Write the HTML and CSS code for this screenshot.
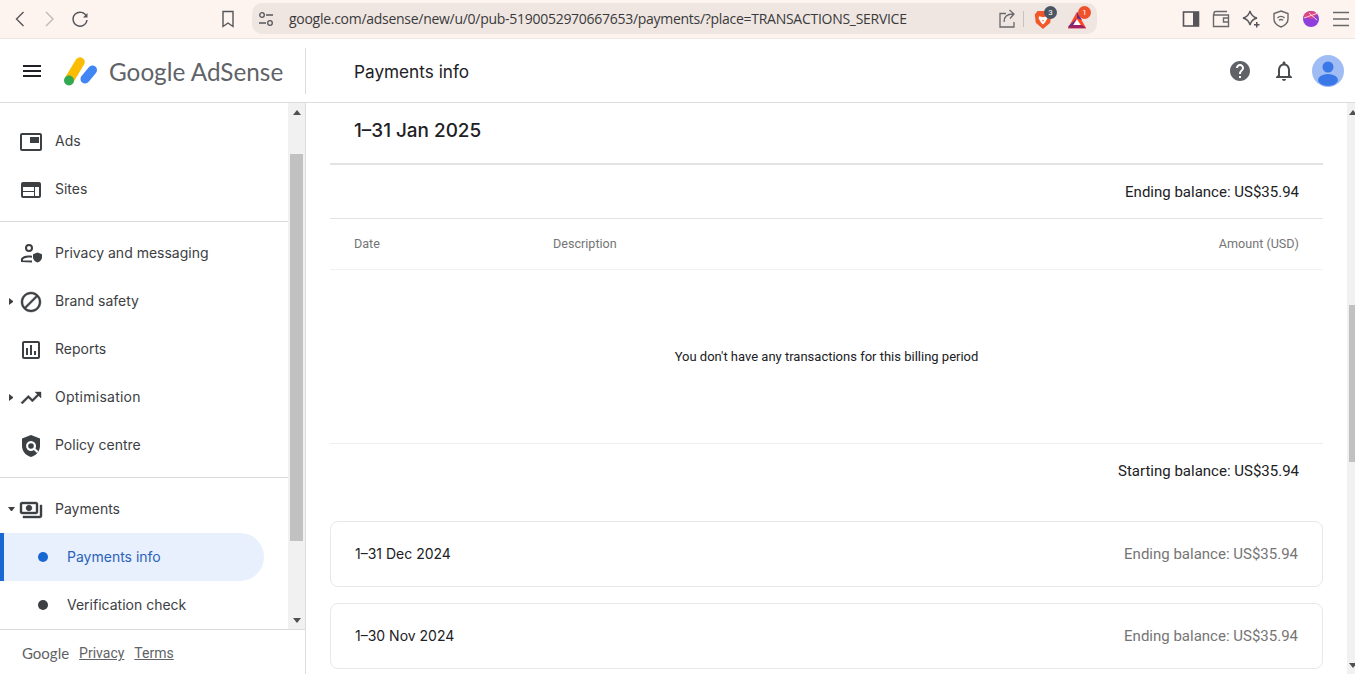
FILE: index.html
```html
<!DOCTYPE html>
<html lang="en">
<head>
<meta charset="utf-8">
<title>Payments info</title>
<link rel="stylesheet" href="styles.css">
</head>
<body>
<div class="toolbar">
  <svg class="tb-icon back" viewBox="0 0 24 24"><path class="stroke-dark" d="M15.500 5l-7 7 7 7"/></svg>
  <svg class="tb-icon forward" viewBox="0 0 24 24"><path class="stroke-light" d="M9 5l7 7-7 7"/></svg>
  <svg class="tb-icon reload" viewBox="0 0 24 24"><path class="stroke-dark" d="M18.500 9.500A7 7 0 1 0 19 13"/><path class="fill-dark" d="M19.500 6v4.500H15z"/></svg>
  <svg class="tb-icon bookmark" viewBox="0 0 24 24"><path class="stroke-dark" d="M7 4.500h10v15l-5-3.500-5 3.500z"/></svg>
  <div class="urlbar">
    <svg class="url-settings" viewBox="0 0 16 16"><circle cx="4" cy="4" r="2.300" class="stroke-dark thin"/><path class="stroke-dark thin" d="M8 4h7M1 12h7"/><circle cx="12" cy="12" r="2.300" class="stroke-dark thin"/></svg>
    <span class="url-text">google.com/adsense/new/u/0/pub-5190052970667653/payments/?place=TRANSACTIONS_SERVICE</span>
    <svg class="tb-icon share" viewBox="0 0 24 24"><path class="stroke-gray thin" d="M11 6.500H5V20h14v-5M9 15c0-5 3-8 9-8M14.500 3l4.500 4-4 4.500"/></svg>
    <span class="url-sep"></span>
    <div class="ext brave">
      <svg viewBox="0 0 20 22" class="ext-svg"><path fill="#f1592a" d="M4 1h12l3 4-1 9-8 7-8-7-1-9z"/><path fill="#fff" d="M6 7l4 1 4-1 1 2-3 5-2 2-2-2-3-5z"/><path fill="#f1592a" d="M9 11h2l-1 2z"/></svg>
      <span class="badge badge-gray">3</span>
    </div>
    <div class="ext bat">
      <svg viewBox="0 0 24 22" class="ext-svg"><path fill="#ff4724" d="M12 1l11 20H1z"/><path fill="#662d91" d="M12 9l-5.500 10H1zM12 1l6 10-6-2z"/><path fill="#9e1f63" d="M6 17h12l5 4H1z"/><path fill="#fff" d="M12 10l4.500 7h-9z"/></svg>
      <span class="badge badge-red">1</span>
    </div>
  </div>
  <svg class="tb-icon side first" viewBox="0 0 24 24"><rect x="4.500" y="5" width="15" height="14" class="stroke-dark thick-ish"/><rect x="14" y="5" width="6" height="14" class="fill-dark"/></svg>
  <svg class="tb-icon side" viewBox="0 0 24 24"><path class="stroke-gray" d="M5 8V6c0-1 1-1.500 2-1.500h11M4.500 8h15v11.500h-15zM20 11h-5.500v4H20"/></svg>
  <svg class="tb-icon side" viewBox="0 0 24 24"><path class="stroke-dark thin" d="M11 4c1 4 3 6 7 7-4 1-6 3-7 7-1-4-3-6-7-7 4-1 6-3 7-7z"/><path class="fill-dark" d="M17 15h1.500v2H20.500v1.500h-2v2H17v-2h-2V17h2z"/></svg>
  <svg class="tb-icon side" viewBox="0 0 24 24"><path class="stroke-gray" d="M12 4l7 2.500V12c0 4-3 6.500-7 8-4-1.500-7-4-7-8V6.500z"/><path class="stroke-gray" d="M8.500 11a5 5 0 0 1 7 0M10 13.300a3 3 0 0 1 4 0"/></svg>
  <svg class="tb-icon side" viewBox="0 0 24 24"><circle cx="12" cy="12" r="8" fill="#8e3fdc"/><path fill="#e0457f" d="M4.300 10a8 8 0 0 1 14-3l-5 5z"/><path d="M5 11l14-5M10 6l8 7" stroke="#f5d5e5" fill="none"/></svg>
  <svg class="tb-icon side" viewBox="0 0 24 24"><path class="stroke-gray" d="M4 5.500h16M4 12h16M4 18.500h16"/></svg>
</div>

<header class="app-header">
  <div class="brand">
    <svg class="menu-icon" viewBox="0 0 24 24"><path d="M3 18h18v-2H3v2zm0-5h18v-2H3v2zm0-7v2h18V6H3z"/></svg>
    <svg class="logo" viewBox="0 0 34 30"><path d="M5.500 23.500L16 6" stroke="#fbbc04" stroke-width="9.500" stroke-linecap="round"/><path d="M21 23L28.500 14" stroke="#4285f4" stroke-width="9" stroke-linecap="round"/><circle cx="5" cy="24.500" r="5" fill="#34a853"/></svg>
    <span class="logo-text">Google AdSense</span>
  </div>
  <h1 class="page-title">Payments info</h1>
  <div class="header-actions">
    <svg class="hd-icon help" viewBox="0 0 24 24"><path d="M12 2C6.480 2 2 6.480 2 12s4.480 10 10 10 10-4.480 10-10S17.520 2 12 2zm1 17h-2v-2h2v2zm2.070-7.750l-.9.920C13.450 12.900 13 13.500 13 15h-2v-.5c0-1.100.45-2.100 1.170-2.830l1.240-1.260c.37-.36.59-.86.59-1.410 0-1.100-.9-2-2-2s-2 .9-2 2H8c0-2.210 1.790-4 4-4s4 1.790 4 4c0 .88-.36 1.680-.93 2.250z"/></svg>
    <svg class="hd-icon bell" viewBox="0 0 24 24"><path d="M12 22c1.100 0 2-.9 2-2h-4c0 1.100.9 2 2 2zm6-6v-5c0-3.070-1.630-5.640-4.500-6.320V4c0-.83-.67-1.500-1.500-1.500s-1.500.67-1.500 1.500v.68C7.640 5.360 6 7.920 6 11v5l-2 2v1h16v-1l-2-2zm-2 1H8v-6c0-2.480 1.510-4.500 4-4.500s4 2.020 4 4.500v6z"/></svg>
    <svg class="avatar" viewBox="0 0 32 32"><circle cx="16" cy="16" r="16" fill="#9fbcf5"/><circle cx="16" cy="12" r="5.500" fill="#3b78e7"/><ellipse cx="16" cy="25" rx="10" ry="6" fill="#3b78e7"/></svg>
  </div>
</header>

<div class="workspace">
  <aside class="sidebar">
    <div class="nav-wrap">
      <nav class="nav">
        <div class="nav-group">
          <a class="nav-item"><span class="caret"></span><svg class="nav-icon" viewBox="0 0 24 24"><rect x="2" y="4" width="20" height="16" rx="1" class="nav-outline"/><rect x="11" y="7" width="9" height="6"/></svg><span class="nav-label">Ads</span></a>
          <a class="nav-item"><span class="caret"></span><svg class="nav-icon" viewBox="0 0 24 24"><path d="M20 4H4c-1.100 0-1.990.9-1.990 2L2 18c0 1.100.9 2 2 2h16c1.100 0 2-.9 2-2V6c0-1.100-.9-2-2-2zm-5 14H4v-4h11v4zm0-5H4V9h11v4zm5 5h-4V9h4v9z"/></svg><span class="nav-label">Sites</span></a>
        </div>
        <div class="nav-group">
          <a class="nav-item"><span class="caret"></span><svg class="nav-icon" viewBox="0 0 24 24"><path d="M10 2a4 4 0 1 1 0 8 4 4 0 0 1 0-8zm0 2a2 2 0 1 0 0 4 2 2 0 0 0 0-4zM2 20v-2.500C2 15 6 13.500 10 13.500c1 0 2 .1 3 .3v2c-1-.2-2-.3-3-.3-3 0-6 1-6 2.300v.7h9v2z"/><path d="M18.500 10.500l4.500 1.800v3c0 2.500-2 4.500-4.500 5.200-2.500-.7-4.500-2.700-4.500-5.200v-3z"/></svg><span class="nav-label">Privacy and messaging</span></a>
          <a class="nav-item"><span class="caret caret-right"></span><svg class="nav-icon heavy" viewBox="0 0 24 24"><path d="M12 2C6.480 2 2 6.480 2 12s4.480 10 10 10 10-4.480 10-10S17.520 2 12 2zM4 12c0-4.420 3.580-8 8-8 1.850 0 3.550.63 4.900 1.690L5.690 16.900C4.630 15.550 4 13.850 4 12zm8 8c-1.850 0-3.550-.63-4.900-1.690L18.310 7.100C19.370 8.450 20 10.150 20 12c0 4.420-3.580 8-8 8z"/></svg><span class="nav-label">Brand safety</span></a>
          <a class="nav-item"><span class="caret"></span><svg class="nav-icon" viewBox="0 0 24 24"><path d="M19 3H5c-1.100 0-2 .9-2 2v14c0 1.100.9 2 2 2h14c1.100 0 2-.9 2-2V5c0-1.100-.9-2-2-2zm0 16H5V5h14v14zM7 10h2v7H7zm4-3h2v10h-2zm4 6h2v4h-2z"/></svg><span class="nav-label">Reports</span></a>
          <a class="nav-item"><span class="caret caret-right"></span><svg class="nav-icon heavy" viewBox="0 0 24 24"><path d="M16 6l2.290 2.290-4.880 4.880-4-4L2 16.590 3.410 18l6-6 4 4 6.300-6.290L22 12V6z"/></svg><span class="nav-label label-wide">Optimisation</span></a>
          <a class="nav-item"><span class="caret"></span><svg class="nav-icon" viewBox="0 0 24 24"><path fill-rule="evenodd" d="M12 1l9 3.500V12c0 5-3.500 9.500-9 11-5.500-1.500-9-6-9-11V4.500zM12 7a5 5 0 1 0 2.900 9.100l3 3 1.500-1.800-3-2.900A5 5 0 0 0 12 7zm0 2.200a2.800 2.800 0 1 1 0 5.600 2.800 2.800 0 0 1 0-5.600z"/></svg><span class="nav-label">Policy centre</span></a>
        </div>
        <div class="nav-group last">
          <a class="nav-item"><span class="caret caret-down"></span><svg class="nav-icon heavy" viewBox="0 0 24 24"><path d="M19 14V6c0-1.100-.9-2-2-2H3c-1.100 0-2 .9-2 2v8c0 1.100.9 2 2 2h14c1.100 0 2-.9 2-2zm-2 0H3V6h14v8zm-7-7c-1.660 0-3 1.340-3 3s1.340 3 3 3 3-1.340 3-3-1.340-3-3-3zm13 0v11c0 1.100-.9 2-2 2H4v-2h17V7h2z"/></svg><span class="nav-label">Payments</span></a>
          <a class="sub-item active"><span class="dot"></span><span class="nav-label">Payments info</span></a>
          <a class="sub-item"><span class="dot"></span><span class="nav-label">Verification check</span></a>
        </div>
      </nav>
      <div class="scrollbar side-scroll">
        <span class="arrow arrow-up"></span>
        <div class="side-thumb-gap"></div>
        <div class="thumb side-thumb"></div>
        <div class="spacer"></div>
        <span class="arrow arrow-down"></span>
      </div>
    </div>
    <footer class="side-footer">
      <span class="foot-brand">Google</span>
      <a class="foot-link">Privacy</a>
      <a class="foot-link">Terms</a>
    </footer>
  </aside>

  <main class="content">
    <section class="panel">
      <h2 class="period-title">1–31 Jan 2025</h2>
      <div class="balance-row ending">Ending balance: US$35.94</div>
      <div class="table-head">
        <span class="col-date">Date</span>
        <span class="col-desc">Description</span>
        <span class="col-amount">Amount (USD)</span>
      </div>
      <div class="empty">You don't have any transactions for this billing period</div>
      <div class="balance-row starting">Starting balance: US$35.94</div>
    </section>
    <div class="period-card"><span class="card-date">1–31 Dec 2024</span><span class="card-balance">Ending balance: US$35.94</span></div>
    <div class="period-card"><span class="card-date">1–30 Nov 2024</span><span class="card-balance">Ending balance: US$35.94</span></div>
  </main>

  <div class="scrollbar main-scroll">
    <span class="arrow arrow-up"></span>
    <div class="main-thumb-gap"></div>
    <div class="thumb main-thumb"></div>
    <div class="spacer"></div>
    <span class="arrow arrow-down"></span>
  </div>
</div>
</body>
</html>
```
FILE: styles.css
```css
* { box-sizing: border-box; }
html, body { margin: 0; height: 100%; overflow: hidden; }
body { width: 1355px; height: 674px; display: flex; flex-direction: column; background: #fff; font-family: Roboto, "Liberation Sans", sans-serif; color: #202124; }

.toolbar { flex: none; height: 39px; display: flex; align-items: center; padding: 0 0 1px 8px; background: #fdf4f0; border-bottom: 1px solid #efe5de; }
.tb-icon { width: 24px; height: 24px; flex: none; fill: none; }
.stroke-dark { fill: none; stroke: #55555a; stroke-width: 1.4; }
.stroke-light { fill: none; stroke: #bdb9b6; stroke-width: 1.4; }
.stroke-gray { fill: none; stroke: #68686a; stroke-width: 1.4; }
.thin { stroke-width: 1.3; }
.thick-ish { stroke-width: 1.6; }
.fill-dark { fill: #55555a; }
.forward { margin-left: 5px; }
.reload { margin-left: 7px; }
.bookmark { margin-left: 124px; }
.urlbar { width: 845px; height: 31px; margin-left: 12px; display: flex; align-items: center; padding-left: 6px; background: #efe6e1; border-radius: 10px; }
.url-settings { width: 16px; height: 16px; flex: none; }
.url-text { margin-left: 15px; width: 670px; white-space: nowrap; font: 14px "Open Sans", sans-serif; letter-spacing: -0.28px; color: #3a3a3c; }
.share { margin-left: 36px; }
.url-sep { width: 1px; height: 16px; margin-left: 4px; background: #c9c2bd; }
.ext { position: relative; width: 24px; height: 24px; flex: none; margin-left: 6px; }
.bat { margin-left: 10px; }
.ext-svg { width: 20px; height: 20px; margin: 3px 0 0 3px; display: block; }
.badge { position: absolute; top: -1px; right: -3px; width: 13px; height: 13px; border-radius: 50%; font: 8px/13px Roboto, sans-serif; text-align: center; color: #fff; }
.badge-gray { background: #4c5563; }
.badge-red { background: #f0502a; }
.side { margin-left: 6px; }
.side.first { margin-left: 82px; }

.app-header { flex: none; height: 64px; display: flex; align-items: center; border-bottom: 1px solid #dadce0; }
.brand { width: 306px; height: 46px; display: flex; align-items: center; padding-left: 20px; border-right: 1px solid #dadce0; }
.menu-icon { width: 24px; height: 24px; fill: #202124; flex: none; }
.logo { width: 34px; height: 30px; margin-left: 20px; flex: none; }
.logo-text { margin: 2px 0 0 11px; font: 24.300px Lato, "Open Sans", sans-serif; color: #5f6368; white-space: nowrap; }
.page-title { margin: 2px 0 0 48px; font: 400 17.200px "Inter", sans-serif; color: #202124; }
.header-actions { margin-left: auto; display: flex; align-items: center; padding-right: 11px; }
.hd-icon { width: 24px; height: 24px; fill: #5f6368; flex: none; }
.hd-icon.bell { margin-left: 20px; fill: #4a4d50; }
.avatar { width: 32px; height: 32px; margin-left: 16px; flex: none; }

.workspace { flex: 1; min-height: 0; display: flex; }
.sidebar { width: 306px; flex: none; display: flex; flex-direction: column; border-right: 1px solid #dadce0; }
.nav-wrap { flex: 1; min-height: 0; display: flex; }
.nav { flex: 1; min-width: 0; padding-top: 14px; overflow: hidden; }
.nav-group { padding-bottom: 8px; margin-bottom: 7px; border-bottom: 1px solid #dadce0; }
.nav-group.last { border-bottom: 0; padding-bottom: 0; margin-bottom: 0; }
.nav-item { height: 48px; display: flex; align-items: center; padding-left: 8px; font: 400 14px "Inter", sans-serif; color: #3c4043; }
.nav-label { padding-bottom: 2px; }
.label-wide { letter-spacing: .25px; }
.caret { width: 6px; height: 6px; margin-right: 5px; flex: none; }
.caret-right { border-left: 4px solid #3c4043; border-top: 3.500px solid transparent; border-bottom: 3.500px solid transparent; height: 7px; margin-left: 1px; margin-right: 4px; }
.caret-down { border-top: 4px solid #3c4043; border-left: 3.500px solid transparent; border-right: 3.500px solid transparent; width: 7px; height: 4px; margin-right: 4px; }
.nav-icon { width: 24px; height: 24px; margin: 2px 12px 0 0; flex: none; fill: #3c4043; }
.nav-icon.heavy { stroke: #3c4043; stroke-width: .4; }
.nav-outline { fill: none; stroke: #3c4043; stroke-width: 2; }
.sub-item { height: 48px; width: 264px; display: flex; align-items: center; padding-left: 38px; font: 400 14px "Inter", sans-serif; color: #3c4043; }
.dot { width: 10px; height: 10px; border-radius: 50%; background: #3c4043; margin-right: 19px; flex: none; }
.sub-item.active { background: #e8f0fe; color: #2a62b8; border-left: 4px solid #1967d2; padding-left: 34px; border-radius: 0 24px 24px 0; }
.sub-item.active .dot { background: #1967d2; }

.scrollbar { flex: none; display: flex; flex-direction: column; align-items: center; background: #f1f1f1; }
.side-scroll { width: 17px; }
.arrow { flex: none; width: 0; height: 0; border-left: 4px solid transparent; border-right: 4px solid transparent; }
.arrow-up { border-bottom: 5px solid #505050; margin-top: 7px; }
.arrow-down { border-top: 5px solid #505050; margin-bottom: 6px; }
.thumb { flex: none; background: #c1c1c1; }
.side-thumb { width: 13px; height: 387px; }
.side-thumb-gap { height: 39px; flex: none; }
.spacer { flex: 1; }

.side-footer { flex: none; height: 45px; display: flex; align-items: center; padding: 2px 0 0 22px; border-top: 1px solid #dadce0; font: 14px Roboto, sans-serif; color: #5f6368; }
.foot-brand { font: 15px "Lato", sans-serif; color: #5f6368; }
.foot-link { margin-left: 10px; text-decoration: underline; }

.content { flex: 1; min-width: 0; padding: 0 24px; overflow: hidden; }
.panel { width: 993px; }
.period-title { margin: 0; height: 62px; padding: 15px 24px 0; font: 500 18.900px/26px "Inter", sans-serif; color: #202124; border-bottom: 2px solid #e3e3e3; }
.balance-row { height: 54px; display: flex; align-items: center; justify-content: flex-end; padding-right: 24px; font: 15px Roboto, sans-serif; color: #202124; }
.ending { border-bottom: 1px solid #e3e3e3; }
.table-head { height: 51px; display: flex; align-items: center; padding: 0 24px 2px; font: 12.600px Roboto, sans-serif; color: #757575; border-bottom: 1px solid #f1f1f1; }
.col-date { width: 199px; }
.col-amount { margin-left: auto; }
.empty { height: 174px; display: flex; align-items: center; justify-content: center; font: 13px Roboto, sans-serif; color: #202124; border-bottom: 1px solid #efefef; }
.starting { border: 0; }
.period-card { height: 66px; display: flex; align-items: center; justify-content: space-between; padding: 0 24px; margin-top: 16px; border: 1px solid #e8e8e8; border-radius: 8px; }
.period-card:first-of-type { margin-top: 23px; }
.card-date { padding-bottom: 2px; font: 400 14px "Inter", sans-serif; color: #202124; }
.card-balance { font: 15px Roboto, sans-serif; color: #757575; }

.main-scroll { width: 8px; align-items: flex-end; overflow: hidden; }
.main-scroll .arrow { transform: translateX(2px); }
.main-thumb-gap { height: 190px; flex: none; }
.main-thumb { width: 6px; height: 157px; }
```
